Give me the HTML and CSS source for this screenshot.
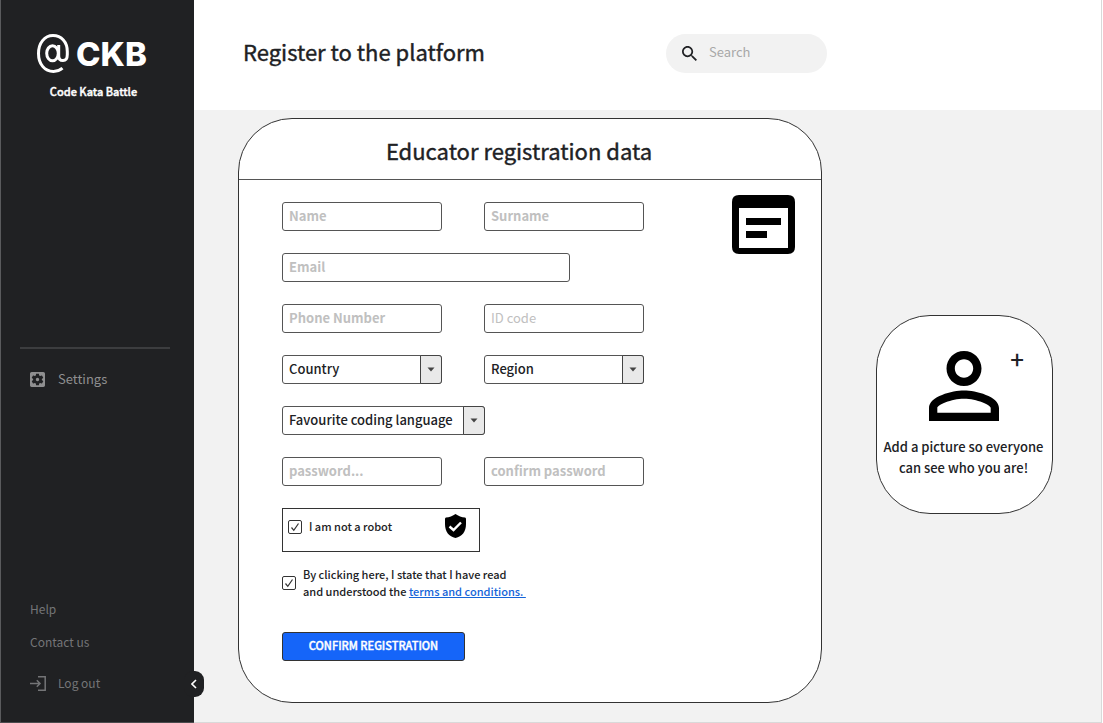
FILE: index.html
```html
<!DOCTYPE html>
<html lang="en">
<head>
<meta charset="utf-8">
<title>Code Kata Battle – Register</title>
<link rel="stylesheet" href="styles.css">
</head>
<body>
<div class="app">
  <aside class="sidebar">
    <div class="brand">
      <div class="brand-row">
        <svg class="brand-mark" viewBox="0 0 32 39" fill="none" stroke="currentColor" stroke-width="3" aria-hidden="true">
          <path d="M25.500 34.200C23 36.400 20 37.400 16.500 37.400C7.500 37.400 1.500 30 1.500 19.500C1.500 9 7.500 1.600 16 1.600C24.500 1.600 30.300 8 30.300 17.500V20.500C30.300 24.500 28.500 26.600 26 26.600C23.200 26.600 21.700 24.800 21.700 22V11"/>
          <ellipse cx="15.500" cy="19.300" rx="5.800" ry="7.500"/>
        </svg>
        <span class="brand-name">CKB</span>
      </div>
      <span class="brand-sub">Code Kata Battle</span>
    </div>
    <nav class="menu">
      <a class="menu-item" href="#settings">
        <svg class="menu-icon" viewBox="3 3 18 18" fill="currentColor" aria-hidden="true"><path d="M12 10c-1.100 0-2 .9-2 2s.9 2 2 2 2-.9 2-2-.9-2-2-2zm7-7H5c-1.110 0-2 .9-2 2v14c0 1.100.89 2 2 2h14c1.110 0 2-.9 2-2V5c0-1.100-.89-2-2-2zm-1.750 9c0 .23-.02.46-.05.68l1.480 1.160c.13.11.17.3.08.45l-1.400 2.420c-.09.15-.27.21-.43.15l-1.740-.7c-.36.28-.76.51-1.180.69l-.26 1.850c-.03.17-.18.3-.35.3h-2.800c-.17 0-.32-.13-.35-.29l-.26-1.850c-.43-.18-.82-.41-1.180-.69l-1.740.7c-.16.06-.34 0-.43-.15l-1.400-2.420c-.09-.15-.05-.34.08-.45l1.480-1.160c-.03-.23-.05-.46-.05-.69 0-.23.02-.46.05-.68l-1.480-1.160c-.13-.11-.17-.3-.08-.45l1.400-2.420c.09-.15.27-.21.43-.15l1.740.7c.36-.28.76-.51 1.180-.69l.26-1.850c.03-.17.18-.3.35-.3h2.800c.17 0 .32.13.35.29l.26 1.850c.43.18.82.41 1.180.69l1.740-.7c.16-.06.34 0 .43.15l1.400 2.420c.09.15.05.34-.08.45l-1.480 1.160c.03.23.05.46.05.69z"/></svg>
        Settings
      </a>
    </nav>
    <nav class="footer-links">
      <a href="#help">Help</a>
      <a href="#contact">Contact us</a>
      <a class="logout" href="#logout">
        <svg class="logout-icon" viewBox="0 0 17 15" fill="none" stroke="currentColor" stroke-width="1.500" aria-hidden="true"><path d="M0 7.500H10M6.800 4.300L10 7.500L6.800 10.700M8 .8H15.200V14.200H8"/></svg>
        Log out
      </a>
    </nav>
    <button class="collapse" type="button" aria-label="Collapse sidebar">
      <svg viewBox="0 0 6 10" fill="none" stroke="currentColor" stroke-width="1.600" aria-hidden="true"><path d="M5 1L1 5L5 9"/></svg>
    </button>
  </aside>

  <div class="page">
    <header class="topbar">
      <h1 class="title">Register to the platform</h1>
      <label class="search">
        <svg class="search-icon" viewBox="3 3 17.500 17.500" fill="currentColor" aria-hidden="true"><path d="M15.500 14h-.79l-.28-.27C15.410 12.590 16 11.110 16 9.500 16 5.910 13.090 3 9.500 3S3 5.910 3 9.500 5.910 16 9.500 16c1.610 0 3.090-.59 4.230-1.570l.27.28v.79l5 4.990L20.490 19l-4.990-5zm-6 0C7.010 14 5 11.990 5 9.500S7.010 5 9.500 5 14 7.010 14 9.500 11.990 14 9.500 14z"/></svg>
        <input class="search-input" type="search" placeholder="Search" aria-label="Search">
      </label>
    </header>

    <main class="content">
      <section class="card">
        <h2 class="card-title">Educator registration data</h2>
        <form class="form">
          <div class="form-main">
            <div class="row">
              <input class="field" type="text" placeholder="Name" aria-label="Name">
              <input class="field" type="text" placeholder="Surname" aria-label="Surname">
            </div>
            <div class="row">
              <input class="field field-wide" type="email" placeholder="Email" aria-label="Email">
            </div>
            <div class="row">
              <input class="field" type="tel" placeholder="Phone Number" aria-label="Phone Number">
              <input class="field field-light" type="text" placeholder="ID code" aria-label="ID code">
            </div>
            <div class="row">
              <span class="pick">
                <select class="field" aria-label="Country"><option>Country</option></select>
                <span class="pick-arrow"><svg viewBox="0 0 8 5" aria-hidden="true"><path d="M.5 .5H7.500L4 4.500z"/></svg></span>
              </span>
              <span class="pick">
                <select class="field" aria-label="Region"><option>Region</option></select>
                <span class="pick-arrow"><svg viewBox="0 0 8 5" aria-hidden="true"><path d="M.5 .5H7.500L4 4.500z"/></svg></span>
              </span>
            </div>
            <div class="row">
              <span class="pick pick-wide">
                <select class="field" aria-label="Favourite coding language"><option>Favourite coding language</option></select>
                <span class="pick-arrow"><svg viewBox="0 0 8 5" aria-hidden="true"><path d="M.5 .5H7.500L4 4.500z"/></svg></span>
              </span>
            </div>
            <div class="row">
              <input class="field" type="password" placeholder="password..." aria-label="Password">
              <input class="field" type="password" placeholder="confirm password" aria-label="Confirm password">
            </div>
            <div class="robot">
              <label class="check">
                <span class="tick">
                  <input type="checkbox" checked>
                  <svg viewBox="0 0 14 14" aria-hidden="true"><path d="M3.500 7.500L5.800 10.300L10.500 3.500"/></svg>
                </span>
                I am not a robot
              </label>
              <svg class="shield" viewBox="0 0 21 24" aria-hidden="true"><path d="M10.500 0C13 2 17 3.200 20 3.600Q21 3.800 21 5V10C21 18 17 22.500 10.500 24C4 22.500 0 18 0 10V5Q0 3.800 1 3.600C4 3.200 8 2 10.500 0z"/><path d="M4.500 12.500L8.500 16L16 8.500" fill="none" stroke="#fff" stroke-width="2.400"/></svg>
            </div>
            <div class="check terms">
              <span class="tick">
                <input type="checkbox" id="terms" checked>
                <svg viewBox="0 0 14 14" aria-hidden="true"><path d="M3.500 7.500L5.800 10.300L10.500 3.500"/></svg>
              </span>
              <label for="terms">By clicking here, I state that I have read<br>and understood the <a href="#terms-text">terms and conditions.&nbsp;</a></label>
            </div>
            <button class="submit" type="submit">CONFIRM REGISTRATION</button>
          </div>
          <svg class="form-icon" viewBox="0 0 63 59" aria-hidden="true"><path fill-rule="evenodd" d="M7 0H56Q63 0 63 7V52Q63 59 56 59H7Q0 59 0 52V7Q0 0 7 0zM7 13V53H56V13zM14 23H49V30H14zM14 36H35V43H14z"/></svg>
        </form>
      </section>

      <button class="picture" type="button">
        <svg class="picture-icon" viewBox="4 4 16 16" aria-hidden="true"><path d="M12 5.900c1.160 0 2.100.94 2.100 2.100s-.94 2.100-2.100 2.100S9.900 9.160 9.900 8s.94-2.100 2.100-2.100m0 9c2.970 0 6.100 1.460 6.100 2.100v1.100H5.900V17c0-.64 3.130-2.100 6.100-2.100M12 4C9.790 4 8 5.790 8 8s1.790 4 4 4 4-1.790 4-4-1.790-4-4-4zm0 9c-2.670 0-8 1.340-8 4v3h16v-3c0-2.660-5.330-4-8-4z"/></svg>
        <span class="picture-plus">+</span>
        <span class="picture-text">Add a picture so everyone can see who you are!</span>
      </button>
    </main>
  </div>
</div>
</body>
</html>
```
FILE: styles.css
```css
* {
  box-sizing: border-box;
}

body {
  margin: 0;
  font-family: "Noto Sans CJK SC", "Noto Sans", sans-serif;
  font-size: 13px;
  font-weight: 500;
  line-height: 20px;
  color: #202124;
  background: #fff;
}

button,
input,
select {
  font: inherit;
  color: inherit;
}

a {
  color: inherit;
  text-decoration: none;
}

svg {
  display: block;
}

.app {
  display: flex;
  min-height: 100vh;
  margin-right: 1px;
  border-right: 1px solid #d9d9d9;
}

/* Sidebar */

.sidebar {
  position: relative;
  display: flex;
  flex-direction: column;
  flex: none;
  width: 194px;
  border-left: 1px solid #5a5b5d;
  border-bottom: 1px solid #4a4b4d;
  background: #202123;
}

.brand {
  display: flex;
  flex-direction: column;
  align-items: center;
  gap: 8px;
  padding: 34px 8px 0 0;
  color: #fff;
  font-size: 11px;
}

.brand-row {
  display: flex;
  align-items: center;
  gap: 7px;
  padding-right: 3px;
}

.brand-mark {
  width: 32px;
  height: 39px;
}

.brand-name {
  font-family: Inter, sans-serif;
  font-size: 33px;
  font-weight: 800;
  line-height: 38px;
}

.brand-sub {
  font-weight: 500;
  -webkit-text-stroke: 0.4px currentColor;
}

.menu {
  margin: 246px 24px 0 19px;
  padding: 20px 10px;
  border-top: 2px solid #3c3d3f;
}

.menu-item {
  display: flex;
  align-items: center;
  gap: 13px;
  color: #8f8f90;
  font-weight: 400;
}

.menu-icon {
  width: 15px;
  height: 15px;
}

.footer-links {
  display: flex;
  flex-direction: column;
  align-items: flex-start;
  gap: 13px;
  margin-top: auto;
  padding: 0 0 29px 29px;
  color: #747577;
  font-size: 12px;
  font-weight: 400;
}

.logout {
  display: flex;
  align-items: center;
  gap: 11px;
  padding-top: 8px;
}

.logout-icon {
  width: 17px;
  height: 15px;
}

.collapse {
  position: absolute;
  right: -10px;
  bottom: 25px;
  display: flex;
  align-items: center;
  justify-content: center;
  width: 20px;
  height: 26px;
  padding: 0;
  border: 0;
  border-radius: 9px;
  color: #fff;
  background: #202123;
}

.collapse svg {
  width: 6px;
  height: 10px;
}

/* Page */

.page {
  display: flex;
  flex-direction: column;
  flex: 1;
  min-width: 0;
  border-bottom: 1px solid #d9d9d9;
  background: #f2f2f2;
}

.topbar {
  display: flex;
  align-items: center;
  padding: 34px 49px 37px;
  background: #fff;
}

.title {
  flex: 0 1 423px;
  margin: 0;
  padding-bottom: 6px;
  font-size: 22px;
  font-weight: 400;
  line-height: 32px;
  -webkit-text-stroke: 0.4px currentColor;
}

.search {
  display: flex;
  align-items: center;
  gap: 12px;
  width: 161px;
  height: 39px;
  padding: 0 16px;
  border-radius: 20px;
  background: #f2f2f2;
}

.search-icon {
  flex: none;
  width: 15px;
  height: 15px;
}

.search-input {
  width: 100%;
  min-width: 0;
  padding: 0 0 4px;
  border: 0;
  outline: 0;
  background: none;
  font-weight: 400;
}

::placeholder {
  color: #a8a8a8;
  opacity: 1;
}

.content {
  display: grid;
  grid-template-columns: minmax(0, 584fr) minmax(0, 177fr);
  align-items: start;
  gap: 54px;
  padding: 8px 48px 18px 44px;
}

/* Registration card */

.card {
  border: 1px solid #333;
  border-radius: 54px;
  background: #fff;
}

.card-title {
  margin: 0;
  padding: 15px 22px 13px 0;
  border-bottom: 1px solid #555;
  font-size: 22px;
  font-weight: 400;
  line-height: 32px;
  text-align: center;
  -webkit-text-stroke: 0.4px currentColor;
}

.form {
  display: flex;
  justify-content: space-between;
  align-items: flex-start;
  padding: 22px 26px 41px 43px;
}

.form-main {
  display: flex;
  flex-direction: column;
  align-items: flex-start;
  gap: 22px;
}

.form-icon {
  flex: none;
  width: 63px;
  height: 59px;
  margin-top: -7px;
}

.row {
  display: flex;
  gap: 42px;
}

.field {
  width: 160px;
  height: 29px;
  padding: 0 6px 2px;
  border: 1px solid #555;
  border-radius: 3px;
  background: #fff;
}

.field::placeholder {
  color: #c0c0c0;
  font-weight: 700;
}

.field-light::placeholder {
  font-weight: 400;
}

.field-wide {
  width: 288px;
}

.pick {
  position: relative;
  display: flex;
  width: 160px;
}

.pick-wide {
  width: 203px;
}

.pick .field {
  width: 100%;
  appearance: none;
}

.pick-arrow {
  position: absolute;
  top: 0;
  right: 0;
  bottom: 0;
  display: flex;
  align-items: center;
  justify-content: center;
  width: 22px;
  border: 1px solid #444;
  border-radius: 0 3px 3px 0;
  background: #e9e9e9;
  pointer-events: none;
}

.pick-arrow svg {
  width: 8px;
  height: 5px;
  fill: #444;
}

.robot {
  display: flex;
  align-items: flex-start;
  justify-content: space-between;
  width: 198px;
  height: 44px;
  padding: 5px 13px 0 5px;
  border: 1px solid #333;
}

.check {
  display: flex;
  align-items: center;
  gap: 7px;
  font-size: 11px;
  line-height: 17px;
}

.robot .check {
  padding-top: 4px;
}

.terms {
  margin-top: -8px;
}

.tick {
  display: grid;
  flex: none;
  width: 14px;
  height: 14px;
}

.tick input,
.tick svg {
  grid-area: 1 / 1;
  width: 14px;
  height: 14px;
}

.tick input {
  margin: 0;
  appearance: none;
  border: 1px solid #333;
  border-radius: 2px;
}

.tick svg {
  fill: none;
  stroke: #333;
  stroke-width: 1.2;
  pointer-events: none;
}

.check a {
  color: #1564d8;
  text-decoration: underline;
}

.shield {
  width: 21px;
  height: 24px;
}

.submit {
  width: 183px;
  height: 29px;
  margin-top: 10px;
  padding: 0 0 3px;
  border: 1px solid #333;
  border-radius: 3px;
  color: #fff;
  background: #1565f9;
  font-size: 11px;
  font-weight: 500;
  -webkit-text-stroke: 0.4px currentColor;
}

/* Profile picture card */

.picture {
  position: relative;
  display: flex;
  flex-direction: column;
  align-items: center;
  gap: 15px;
  margin-top: 197px;
  padding: 35px 5px 35px 3px;
  border: 1px solid #333;
  border-radius: 54px;
  background: #fff;
  line-height: 21px;
}

.picture-icon {
  width: 70px;
  height: 70px;
}

.picture-plus {
  position: absolute;
  top: 32px;
  right: 28px;
  font-size: 24px;
}
```
